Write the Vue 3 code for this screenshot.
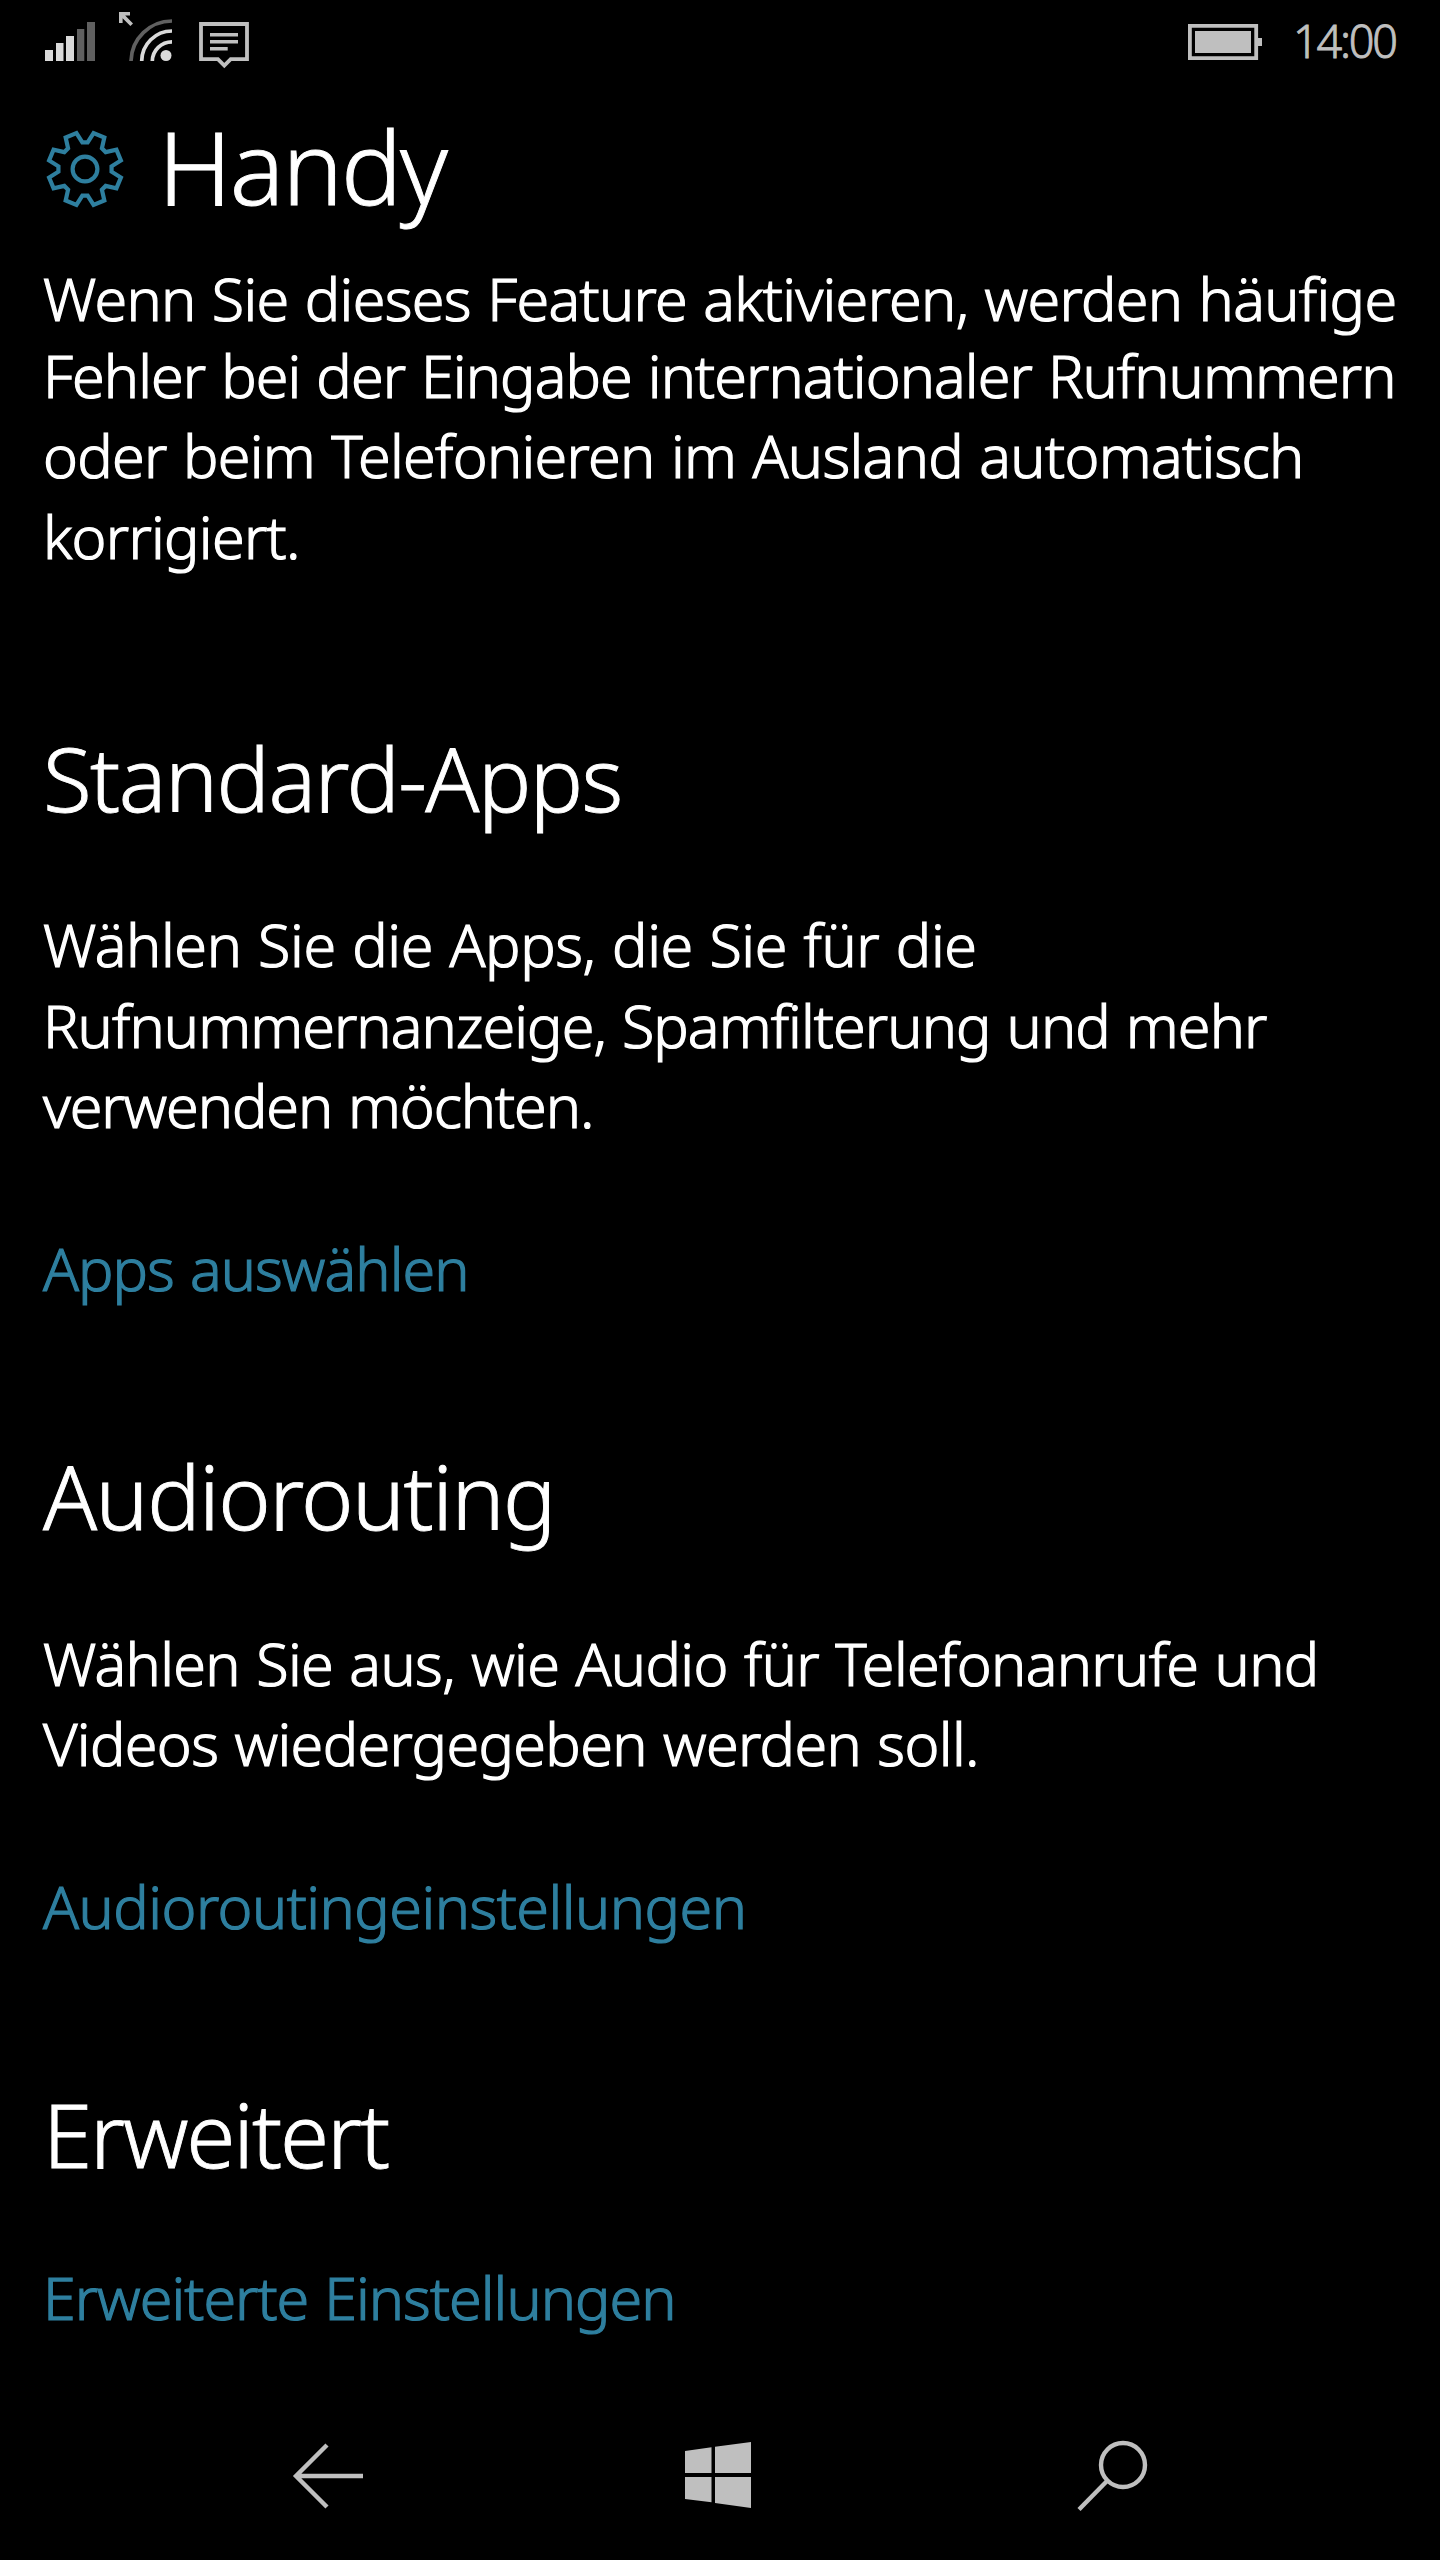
<script setup>
const intro = [
    { text: 'Wenn Sie dieses Feature aktivieren, werden häufige', spacing: -0.67 },
    { text: 'Fehler bei der Eingabe internationaler Rufnummern', spacing: -0.91 },
    { text: 'oder beim Telefonieren im Ausland automatisch', spacing: -0.67 },
    { text: 'korrigiert.', spacing: -0.7 },
];

const sections = [
    {
        title: { text: 'Standard-Apps', spacing: -1.5 },
        lines: [
            { text: 'Wählen Sie die Apps, die Sie für die', spacing: -0.38 },
            { text: 'Rufnummernanzeige, Spamfilterung und mehr', spacing: -0.9 },
            { text: 'verwenden möchten.', spacing: -1.06 },
        ],
        link: { text: 'Apps auswählen', spacing: -0.93 },
    },
    {
        title: { text: 'Audiorouting', spacing: -1.5 },
        lines: [
            { text: 'Wählen Sie aus, wie Audio für Telefonanrufe und', spacing: -0.64 },
            { text: 'Videos wiedergegeben werden soll.', spacing: -0.63 },
        ],
        link: { text: 'Audioroutingeinstellungen', spacing: -0.51 },
    },
    {
        title: { text: 'Erweitert', spacing: -2.15 },
        lines: [],
        link: { text: 'Erweiterte Einstellungen', spacing: -0.97 },
    },
];

const tracking = (item) => ({ letterSpacing: `${item.spacing}px` });

// Outline of the gear: eight teeth around the centre
const gearPoints = [];
for (let i = 0; i < 8; i++) {
    [[5.7, 26.7], [13.4, 36.9], [31.6, 36.9], [39.3, 26.7]].forEach(([offset, radius]) => {
        const angle = (45 * i + offset) * Math.PI / 180;
        gearPoints.push(`${(radius * Math.sin(angle)).toFixed(2)},${(-radius * Math.cos(angle)).toFixed(2)}`);
    });
}
const gear = gearPoints.join(' ');
</script>

<template>
    <div class="screen">
        <header class="status">
            <div class="status-left">
                <svg class="signal" viewBox="0 0 50 39">
                    <path class="on" d="M0 28h8v11H0zM11 21h7.5v18H11zM21 14h8v25H21z" />
                    <path class="off" d="M32 7h7.3v32H32zM42 0h8v39H42z" />
                </svg>
                <svg class="wifi" viewBox="0 0 53 49">
                    <path class="arrow" d="M0 0h11v3.6H6.2L14 11.4 11.4 14 3.6 6.2V11H0z" />
                    <path class="ring off-ring" d="M12 49A41 41 0 0 1 53 9" />
                    <path class="ring" d="M22.7 49A30.3 30.3 0 0 1 53 19" />
                    <path class="ring" d="M33.3 49A19.7 19.7 0 0 1 53 29.8" />
                    <circle class="on" cx="47" cy="43.5" r="5.5" />
                </svg>
                <svg class="message" viewBox="0 0 50 46">
                    <path class="frame" d="M2 2h46v35.2H31.7l-6.4 6.4-6.4-6.4H2z" />
                    <path class="fill" d="M11 11h28v3.5H11zM11 18h28v3.5H11zM11 25h17.7v3.5H11z" />
                </svg>
            </div>
            <div class="status-right">
                <svg class="battery" viewBox="0 0 74 36">
                    <path class="frame" d="M1.9 1.9h66.3v32.2H1.9z" />
                    <path class="fill" d="M7 7h56v22H7zM70 14h4v8h-4z" />
                </svg>
                <span class="clock">14:00</span>
            </div>
        </header>

        <div class="heading">
            <svg class="gear" viewBox="-40 -40 80 80">
                <polygon :points="gear" />
                <circle r="12.4" />
            </svg>
            <h1>Handy</h1>
        </div>

        <main>
            <div class="intro">
                <p v-for="line in intro" :key="line.text" :style="tracking(line)">{{ line.text }}</p>
            </div>
            <section v-for="section in sections" :key="section.title.text">
                <h2 :style="tracking(section.title)">{{ section.title.text }}</h2>
                <div v-if="section.lines.length" class="description">
                    <p v-for="line in section.lines" :key="line.text" :style="tracking(line)">{{ line.text }}</p>
                </div>
                <a :style="tracking(section.link)">{{ section.link.text }}</a>
            </section>
        </main>

        <nav>
            <svg class="back" viewBox="0 0 66 66">
                <path d="M70 33H3M34 2L3 33l31 31" />
            </svg>
            <svg class="home" viewBox="0 0 66 66">
                <path d="M0 9L26.5 5.3V31H0zM30 4.8L66 0v31H30zM0 35h26.5v25.2L0 57zM30 35h36v31L30 61z" />
            </svg>
            <svg class="search" viewBox="0 0 71 70">
                <circle cx="46" cy="24" r="22" />
                <path d="M30.5 39.5L2 68.5" />
            </svg>
        </nav>
    </div>
</template>

<style>
body {
    background: #000;
}
</style>

<style scoped>
.screen {
    display: flex;
    flex-direction: column;
    width: 1440px;
    height: 2560px;
    background: #000;
    color: #fff;
    font-family: "Noto Sans", "Open Sans", sans-serif;
    font-weight: 300;
    overflow: hidden;
}

svg {
    display: block;
    flex: none;
    overflow: visible;
}

h1,
h2,
p {
    margin: 0;
    font-weight: 300;
    white-space: nowrap;
}

.status {
    display: flex;
    justify-content: space-between;
    height: 80px;
    padding: 0 43px 0 45px;
}

.status-left,
.status-right {
    display: flex;
    align-items: flex-start;
}

.signal {
    width: 50px;
    height: 39px;
    margin-top: 22px;
}

.wifi {
    width: 53px;
    height: 49px;
    margin: 12px 27px 0 24px;
}

.message {
    width: 50px;
    height: 46px;
    margin-top: 22px;
}

.battery {
    width: 74px;
    height: 36px;
    margin: 24px 31px 0 0;
}

.on {
    fill: #dadada;
}

.off {
    fill: #606060;
}

.arrow,
.fill {
    fill: #bfbfbf;
}

.ring {
    fill: none;
    stroke: #dadada;
    stroke-width: 3.7;
}

.off-ring {
    stroke: #606060;
}

.frame {
    fill: none;
    stroke: #bfbfbf;
    stroke-width: 3.8;
}

.clock {
    width: 104px;
    color: #bfbfbf;
    font-size: 45px;
    line-height: 81px;
    letter-spacing: -2.2px;
    -webkit-text-stroke: .9px #bfbfbf;
}

.heading {
    display: flex;
    align-items: center;
    height: 177.5px;
    padding-left: 44.5px;
}

.gear {
    width: 80px;
    height: 80px;
    fill: none;
    stroke: #2e7f9f;
    stroke-width: 4.2;
}

h1 {
    margin-left: 33.5px;
    font-size: 102px;
    line-height: 160px;
    letter-spacing: -2.1px;
    -webkit-text-stroke: .9px #fff;
    padding-bottom: 6px;
}

main {
    flex: 1;
    padding-left: 43px;
}

p,
a {
    display: block;
    height: 80.5px;
    font-size: 59.2px;
    line-height: 80.5px;
    white-space: nowrap;
    word-spacing: 1.5px;
    -webkit-text-stroke: 1.2px currentColor;
}

.intro {
    padding-bottom: 14px;
}

.intro p:first-child {
    height: 77px;
}

section {
    padding-top: 127.5px;
}

h2 {
    margin-bottom: 62.5px;
    font-size: 89px;
    line-height: 120px;
    -webkit-text-stroke: .9px #fff;
}

.description {
    padding-top: 4px;
    margin-bottom: 82.5px;
}

a {
    color: #2e7f9f;
}

nav {
    display: flex;
    justify-content: space-between;
    align-items: center;
    height: 171px;
    padding: 0 292px 0 293px;
}

nav svg {
    fill: none;
    stroke: #bfbfbf;
    stroke-width: 4.4;
}

.back {
    width: 66px;
    height: 66px;
    margin-top: 2px;
}

nav .home {
    width: 66px;
    height: 66px;
    fill: #bfbfbf;
    stroke: none;
}

.search {
    width: 71px;
    height: 70px;
    margin-top: 2px;
}
</style>
